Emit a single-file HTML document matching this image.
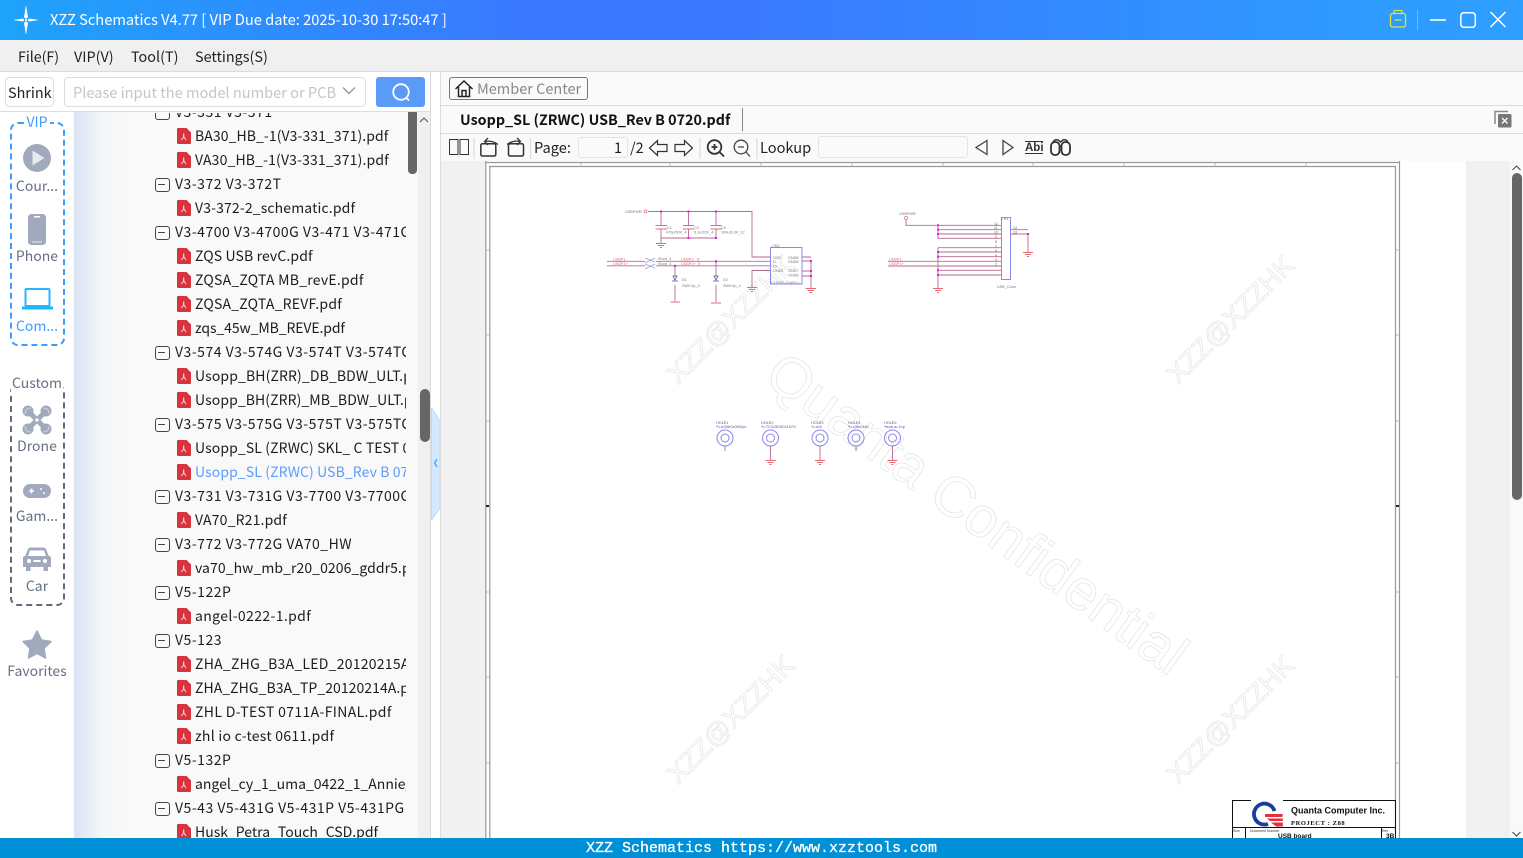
<!DOCTYPE html>
<html><head><meta charset="utf-8"><style>
*{box-sizing:border-box}
html,body{margin:0;padding:0;width:1523px;height:858px;overflow:hidden;background:#fafafa;font-family:"Liberation Sans","Noto Sans CJK SC",sans-serif}
.a{position:absolute}
.t{position:absolute;white-space:nowrap;font-family:"Noto Sans CJK SC","Liberation Sans",sans-serif;font-size:14.400px;line-height:20px;color:#222}
#tree{position:absolute;left:74px;top:113px;width:332px;height:725px;overflow:hidden}
#tree .t{color:#1c1c1c;font-size:14px;letter-spacing:.12px}
#tree .g{left:101px;letter-spacing:.5px}
#tree .f{left:121px}
#tree .g:before{content:"";position:absolute;left:-20px;top:4px;width:13px;height:12px;border:1px solid #444;border-radius:3px}
#tree .g:after{content:"";position:absolute;left:-17px;top:10px;width:7px;height:1px;background:#444}
#tree .f:before{content:"";position:absolute;left:-18px;top:2px;width:14px;height:16px;background:#d7333d;border-radius:1px;clip-path:polygon(0 0,68% 0,100% 28%,100% 100%,0 100%)}
#tree .f:after{content:"⅄";position:absolute;left:-14px;top:2px;width:8px;font:9px/18px "Liberation Sans",sans-serif;letter-spacing:0;color:#fff}
.side{position:absolute;left:0;width:74px;text-align:center;font-family:"Noto Sans CJK SC","Liberation Sans",sans-serif;font-size:14px;line-height:20px;color:#667085}
</style></head><body>

<div class="a" style="left:0;top:0;width:1523px;height:40px;background:linear-gradient(90deg,#1ea3fb 0%,#3a78ff 35%,#3a78ff 48%,#2e9bff 90%,#2e9eff 100%)"></div>
<svg class="a" style="left:10px;top:4px" width="32" height="32" viewBox="0 0 32 32"><path d="M16 1L18 13L16 15L14 13ZM16 31L18 19L16 17L14 19ZM3 16L13 14.500L14.500 16L13 17.500ZM29 16L19 14.500L17.500 16L19 17.500Z" fill="#fff"/><circle cx="16" cy="16" r="1" fill="#fff"/></svg>
<div class="t" style="left:50px;top:10px;color:#fff;font-size:14.670px">XZZ Schematics V4.77 [ VIP Due date: 2025-10-30 17:50:47 ]</div>
<svg class="a" style="left:1385px;top:6px" width="130" height="28" viewBox="0 0 130 28" fill="none"><rect x="5.500" y="7.500" width="15" height="13.500" rx="2" stroke="#dfe23c" stroke-width="1.300"/><path d="M9 7.500V5.500Q9 4.500 10 4.500H16Q17 4.500 17 5.500V7.500M9.500 14H16.500" stroke="#dfe23c" stroke-width="1.300"/><path d="M32.500 4V24" stroke="#6dbbff"/><path d="M45 14H61" stroke="#fff" stroke-width="1.600"/><rect x="75.800" y="6.800" width="14.500" height="14.500" rx="3" stroke="#fff" stroke-width="1.500"/><path d="M105.500 6L120.500 21M120.500 6L105.500 21" stroke="#fff" stroke-width="1.500"/></svg>

<div class="a" style="left:0;top:40px;width:1523px;height:32px;background:#f0f0f0;border-bottom:1px solid #dcdcdc"></div>
<div class="t" style="left:18px;top:47px;font-size:14.200px">File(F)</div>
<div class="t" style="left:74px;top:47px">VIP(V)</div>
<div class="t" style="left:131px;top:47px">Tool(T)</div>
<div class="t" style="left:195px;top:47px">Settings(S)</div>

<div class="a" style="left:0;top:72px;width:431px;height:40px;background:#fff;border-bottom:1px solid #ddd"></div>
<div class="a" style="left:5px;top:77px;width:49px;height:30px;background:#fff;border:1px solid #ddd;border-radius:4px"></div>
<div class="t" style="left:8px;top:83px">Shrink</div>
<div class="a" style="left:64px;top:77px;width:302px;height:30px;background:#fff;border:1px solid #ddd;border-radius:4px"></div>
<div class="t" style="left:73px;top:83px;color:#c3c6cc;font-size:14.600px">Please input the model number or PCB</div>
<svg class="a" style="left:341px;top:85px" width="16" height="12" fill="none"><path d="M2 2.500L8 8.500L14 2.500" stroke="#999" stroke-width="1.400"/></svg>
<div class="a" style="left:376px;top:77px;width:49px;height:30px;background:#5a9bfa;border-radius:3px"></div>
<svg class="a" style="left:390px;top:81px" width="22" height="22" fill="none"><circle cx="11" cy="11" r="7.800" stroke="#fff" stroke-width="1.800"/><path d="M16.500 17L19 19.500" stroke="#fff" stroke-width="1.800"/></svg>

<!-- sidebar -->
<div class="a" style="left:0;top:112px;width:74px;height:726px;background:#fff"></div>
<div class="a" style="left:9.500px;top:122px;width:55px;height:224px;border:2px dashed #3e9bff;border-radius:8px"></div>
<div class="side" style="top:112px;color:#3e9bff"><span style="background:#fff;padding:0 2px">VIP</span></div>
<svg class="a" style="left:22px;top:143px" width="30" height="30"><circle cx="15" cy="15" r="14" fill="#a1a9bd"/><path d="M10.500 7.500L22.500 15L10.500 22.500Z" fill="#e8eaf0"/></svg>
<div class="side" style="top:176px">Cour...</div>
<svg class="a" style="left:28px;top:214px" width="18" height="31"><rect width="18" height="31" rx="3.500" fill="#a1a9bd"/><rect x="6" y="2" width="6" height="1.500" fill="#fff"/><rect x="4" y="27.500" width="10" height="1" fill="#e8eaf0"/></svg>
<div class="side" style="top:246px">Phone</div>
<svg class="a" style="left:22px;top:288px" width="31" height="22" fill="none"><rect x="3.500" y="1" width="24" height="17" rx="1" stroke="#2ab4ff" stroke-width="2"/><path d="M0 20H31" stroke="#17b8ff" stroke-width="3"/></svg>
<div class="side" style="top:316px;color:#3e9bff">Com...</div>

<div class="a" style="left:9.500px;top:384px;width:55px;height:222px;border:2px dashed #606a7d;border-radius:8px"></div>
<div class="side" style="top:373px"><span style="background:#fff;padding:0 1px">Custom</span></div>
<svg class="a" style="left:22px;top:405px" width="30" height="30" fill="none"><g fill="#a1a9bd"><circle cx="6" cy="6" r="5.500"/><circle cx="24" cy="6" r="5.500"/><circle cx="6" cy="24" r="5.500"/><circle cx="24" cy="24" r="5.500"/></g><path d="M6 6L24 24M24 6L6 24" stroke="#a1a9bd" stroke-width="5"/><circle cx="15" cy="15" r="2.500" fill="#fff" stroke="#a1a9bd" stroke-width="1.500"/><path d="M3 9Q3 3 9 3M27 9Q27 3 21 3M3 21Q3 27 9 27M27 21Q27 27 21 27" stroke="#d0d4de"/></svg>
<div class="side" style="top:436px">Drone</div>
<svg class="a" style="left:23px;top:484px" width="28" height="14"><rect width="28" height="14" rx="7" fill="#a1a9bd"/><path d="M6 7H11M8.500 4.500V9.500" stroke="#fff" stroke-width="1.500"/><circle cx="18" cy="5" r="1" fill="#fff"/><circle cx="21" cy="9" r="1" fill="#fff"/></svg>
<div class="side" style="top:506px">Gam...</div>
<svg class="a" style="left:23px;top:547px" width="28" height="25"><path d="M5 2Q6 0.500 8 0.500H20Q22 0.500 23 2L25.500 8.500L28 10V20H25V24H20.500V20H7.500V24H3V20H0V10L2.500 8.500ZM7 3.500L5 9H23L21 3.500Z" fill="#a1a9bd" fill-rule="evenodd"/><circle cx="6" cy="14" r="2" fill="#fff"/><circle cx="22" cy="14" r="2" fill="#fff"/><rect x="10.500" y="13" width="7" height="2" fill="#fff"/></svg>
<div class="side" style="top:576px">Car</div>
<svg class="a" style="left:22px;top:630px" width="30" height="29"><path d="M15 1L19.500 10L29 11.500L22 18.500L23.500 28L15 23.500L6.500 28L8 18.500L1 11.500L10.500 10Z" fill="#a1a9bd" stroke="#a1a9bd" stroke-linejoin="round" stroke-width="1.500"/></svg>
<div class="side" style="top:661px">Favorites</div>

<!-- tree -->
<div class="a" style="left:74px;top:112px;width:344px;height:726px;background:linear-gradient(90deg,#dbe4f3 0,#f3f5f8 26px,#f9f9f9 50px)"></div>
<div id="tree">
<div class="t g" style="top:-11px">V3-331 V3-371</div>
<div class="t f" style="top:13px;letter-spacing:.08px">BA30_HB_-1(V3-331_371).pdf</div>
<div class="t f" style="top:37px;letter-spacing:.15px">VA30_HB_-1(V3-331_371).pdf</div>
<div class="t g" style="top:61px">V3-372 V3-372T</div>
<div class="t f" style="top:85px;letter-spacing:.14px">V3-372-2_schematic.pdf</div>
<div class="t g" style="top:109px">V3-4700 V3-4700G V3-471 V3-471G</div>
<div class="t f" style="top:133px">ZQS USB revC.pdf</div>
<div class="t f" style="top:157px;letter-spacing:.24px">ZQSA_ZQTA MB_revE.pdf</div>
<div class="t f" style="top:181px;letter-spacing:.22px">ZQSA_ZQTA_REVF.pdf</div>
<div class="t f" style="top:205px;letter-spacing:-.1px">zqs_45w_MB_REVE.pdf</div>
<div class="t g" style="top:229px">V3-574 V3-574G V3-574T V3-574TG</div>
<div class="t f" style="top:253px">Usopp_BH(ZRR)_DB_BDW_ULT.pdf</div>
<div class="t f" style="top:277px;letter-spacing:.08px">Usopp_BH(ZRR)_MB_BDW_ULT.pdf</div>
<div class="t g" style="top:301px">V3-575 V3-575G V3-575T V3-575TG</div>
<div class="t f" style="top:325px;letter-spacing:.1px">Usopp_SL (ZRWC) SKL_ C TEST 0720.pdf</div>
<div class="t f" style="top:349px;color:#5b9cff;letter-spacing:.1px">Usopp_SL (ZRWC) USB_Rev B 0720.pdf</div>
<div class="t g" style="top:373px">V3-731 V3-731G V3-7700 V3-7700G</div>
<div class="t f" style="top:397px;letter-spacing:.17px">VA70_R21.pdf</div>
<div class="t g" style="top:421px">V3-772 V3-772G VA70_HW</div>
<div class="t f" style="top:445px;letter-spacing:.07px">va70_hw_mb_r20_0206_gddr5.pdf</div>
<div class="t g" style="top:469px">V5-122P</div>
<div class="t f" style="top:493px;letter-spacing:.37px">angel-0222-1.pdf</div>
<div class="t g" style="top:517px">V5-123</div>
<div class="t f" style="top:541px;letter-spacing:.25px">ZHA_ZHG_B3A_LED_20120215A.pdf</div>
<div class="t f" style="top:565px;letter-spacing:.05px">ZHA_ZHG_B3A_TP_20120214A.pdf</div>
<div class="t f" style="top:589px;letter-spacing:.35px">ZHL D-TEST 0711A-FINAL.pdf</div>
<div class="t f" style="top:613px;letter-spacing:.27px">zhl io c-test 0611.pdf</div>
<div class="t g" style="top:637px">V5-132P</div>
<div class="t f" style="top:661px;letter-spacing:0">angel_cy_1_uma_0422_1_Annie_0422.pdf</div>
<div class="t g" style="top:685px">V5-43 V5-431G V5-431P V5-431PG</div>
<div class="t f" style="top:709px;letter-spacing:0">Husk_Petra_Touch_CSD.pdf</div>
</div>
<div class="a" style="left:408px;top:112px;width:9px;height:62px;background:#666;border-radius:0 0 4px 4px"></div>
<div class="a" style="left:418px;top:112px;width:12px;height:726px;background:#f0f0f0"></div>
<svg class="a" style="left:418px;top:115px" width="12" height="10" fill="none"><path d="M2 7L6 3L10 7" stroke="#555"/></svg>
<div class="a" style="left:420px;top:389px;width:9.500px;height:53px;background:#666;border-radius:5px"></div>
<div class="a" style="left:430px;top:72px;width:1px;height:766px;background:#dcdcdc"></div>
<div class="a" style="left:431px;top:72px;width:9px;height:766px;background:#fff"></div>
<svg class="a" style="left:431px;top:408px" width="10" height="112"><path d="M0.500 0L9 13V100L0.500 112Z" fill="#d4e9ff" stroke="#b6dbff"/><path d="M6 51L3.500 55L6 59" fill="none" stroke="#4da3f5" stroke-width="1.300"/></svg>
<div class="a" style="left:440px;top:72px;width:1px;height:766px;background:#dcdcdc"></div>

<!-- right header -->
<div class="a" style="left:441px;top:72px;width:1082px;height:89px;background:#fafafa"></div>
<div class="a" style="left:441px;top:105px;width:1082px;height:1px;background:#dcdcdc"></div>
<div class="a" style="left:441px;top:133px;width:1082px;height:1px;background:#dcdcdc"></div>
<div class="a" style="left:449px;top:77px;width:139px;height:23px;border:1px solid #777;border-radius:3px;background:#fafafa"></div>
<svg class="a" style="left:454px;top:79px" width="20" height="19" fill="none"><path d="M1.500 10L10 2L18.500 10M4.500 8V17.500H15.500V8M8 17.500V11.500H12V17.500" stroke="#222" stroke-width="1.500"/></svg>
<div class="t" style="left:477px;top:79px;color:#888;font-size:14.500px">Member Center</div>
<div class="t" style="left:460px;top:110px;font-weight:700;color:#111;font-size:14.300px">Usopp_SL (ZRWC) USB_Rev B 0720.pdf</div>
<div class="a" style="left:742px;top:108px;width:1px;height:23px;background:#888"></div>
<svg class="a" style="left:1494px;top:110px" width="18" height="18" fill="none"><path d="M1 14V1.500H14" stroke="#888" stroke-width="1.500"/><rect x="4" y="4" width="13.500" height="13.500" rx="1" fill="#777"/><path d="M8 8L13.500 13.500M13.500 8L8 13.500" stroke="#fff" stroke-width="1.300"/></svg>

<!-- toolbar -->
<svg class="a" style="left:441px;top:134px" width="640" height="27" fill="none" stroke="#333" stroke-width="1.200">
<rect x="8.500" y="5.500" width="8.500" height="15" stroke-width="1"/><rect x="19" y="5.500" width="8.500" height="15" stroke-width="1"/>
<path d="M33 4V25M89.500 4V25M259 4V25M316 4V25" stroke="#ddd"/>
<rect x="39.800" y="9.800" width="15" height="12.200" rx="1.500" stroke-width="1.500"/><path d="M44 7.500Q51 6 57 10.500M47 4L43.500 7.500L47 11" stroke-width="1.300"/>
<rect x="67.500" y="9.800" width="15" height="12.200" rx="1.500" stroke-width="1.500"/><path d="M79 7.500Q72 6 66 10.500M76 4L79.500 7.500L76 11" stroke-width="1.300"/>
<path d="M208.500 14L216.500 6.500V10.500H226V17.500H216.500V21.500Z"/>
<path d="M251.500 14L243.500 6.500V10.500H234V17.500H243.500V21.500Z"/>
<circle cx="273.500" cy="13" r="6.800" stroke-width="1.800"/><path d="M278.500 18L283 22.500M270.500 13H276.500M273.500 10V16" stroke-width="1.800"/>
<circle cx="300" cy="13" r="6.800" stroke="#444" stroke-width="1.300"/><path d="M305 18L309 22.500M297 13H303" stroke="#444" stroke-width="1.300"/>
<path d="M546 6.500L535 13.500L546 20.500Z" stroke="#444" stroke-width="1.300"/>
<path d="M562 6.500L572 13.500L562 20.500Z" stroke="#444" stroke-width="1.300"/>
<path d="M584 7.500H602M584 19.500H602" stroke-width="1"/>
<rect x="610" y="8" width="8.500" height="13" rx="4" stroke-width="1.800"/><rect x="620.500" y="8" width="8.500" height="13" rx="4" stroke-width="1.800"/><path d="M618.500 12H620.500" stroke-width="1.800"/><path d="M612 8Q614 5 617 6L619.500 8L622 6Q625 5 627 8" stroke-width="1.500"/>
</svg>
<div class="t" style="left:534px;top:138px;font-size:14.600px">Page:</div>
<div class="a" style="left:578px;top:137px;width:50px;height:21px;border:1px solid #e3e3e3;border-radius:3px;background:#fafafa"></div>
<div class="t" style="left:614px;top:138px">1</div>
<div class="t" style="left:630px;top:138px">/2</div>
<div class="t" style="left:760px;top:138px;font-size:14.600px">Lookup</div>
<div class="a" style="left:818px;top:136px;width:150px;height:22px;border:1px solid #e3e3e3;border-radius:3px;background:#fafafa"></div>
<div class="a" style="left:1025px;top:141.500px;font:bold 11.500px/13px 'Liberation Sans',sans-serif;color:#333;white-space:nowrap">Abi</div>

<!-- viewer -->
<div class="a" style="left:441px;top:161px;width:1069px;height:677px;background:#f1f1f1"></div>
<div class="a" style="left:485px;top:161px;width:981px;height:677px;background:#fff"></div>
<div class="a" style="left:1510px;top:161px;width:13px;height:677px;background:#f9f9f9"></div>
<svg class="a" style="left:1510px;top:163px" width="13" height="10" fill="none"><path d="M2.500 7L6.500 3L10.500 7" stroke="#444"/></svg>
<svg class="a" style="left:1510px;top:830px" width="13" height="8" fill="none"><path d="M2.500 2L6.500 6L10.500 2" stroke="#444"/></svg>
<div class="a" style="left:1512px;top:173px;width:10px;height:327px;background:#666;border-radius:5px"></div>

<svg class="a" style="left:485px;top:161px" width="981" height="677" viewBox="485 161 981 677" fill="none" font-family="Liberation Sans,sans-serif">
<!-- frame -->
<path d="M485.800 161V838M1399.500 161V838M485 162.500H1400" stroke="#999" stroke-width="1.200"/>
<path d="M489.800 167V838M1395.500 167V838M489 166.500H1396" stroke="#999" stroke-width="1.200"/>
<path d="M581 163V166M670 163V166M761 163V166M852 163V166M943 163V166M1033 163V166M1124 163V166M1215 163V166M1306 163V166M486 250H489M486 335H489M486 421H489M486 592H489M486 677H489M486 763H489M1396 250H1399M1396 335H1399M1396 421H1399M1396 592H1399M1396 677H1399M1396 763H1399" stroke="#aaa" stroke-width=".8"/>
<path d="M486 506H489M1396 506H1399" stroke="#222" stroke-width="2"/>

<!-- watermarks -->
<g font-size="27" stroke="#e6e6e6" stroke-width=".8" fill="#fff" font-family="Liberation Sans,sans-serif">
<text transform="translate(678,385) rotate(-45)">XZZ@XZZHK</text>
<text transform="translate(1178,385) rotate(-45)">XZZ@XZZHK</text>
<text transform="translate(678,785) rotate(-45)">XZZ@XZZHK</text>
<text transform="translate(1178,785) rotate(-45)">XZZ@XZZHK</text>
<text transform="translate(762,381) rotate(36)" font-size="57">Quanta Confidential</text>
</g>

<!-- schematic 1 -->
<g stroke="#b56a8e" stroke-width=".9">
<path d="M648 211.500H752V257H770"/>
<path d="M661 211.500V226M661 229V238M688.500 211.500V226M688.500 229V238M716 211.500V226M716 229V238M661 238H716M661 238V243"/>
<path d="M607 261.300H645M607 265.800H645M656 261.300H770M656 265.800H770" />
<path d="M675 265.800V276M675 285V301M716 261.300V276M716 285V302"/>
<path d="M752 287V270.500H770M802 257H811M802 261H811M802 271H811M802 276H811M811 261V288"/>
</g>
<g stroke="#e46a78" stroke-width=".9">
<path d="M655.500 225.500H667M655.500 229H667M683 225.500H694M683 229H694M710.500 225.500H721.500M710.500 229H721.500"/>
<path d="M656 243.500H666M658 245.500H664M660 247.500H662M747 287.500H757M749 289.500H755M751 291.500H753M805.500 288.500H816M807.500 290.500H814M809.500 292.500H812M670.500 302H680M711 303H721"/>
<path d="M645 258L655 262M645 264L655 268M645 263L655 258M645 269L655 264" stroke-width=".6" stroke="#7777cc"/>
</g>
<circle cx="645.500" cy="211.500" r="1.500" stroke="#e46a78" stroke-width=".7"/>
<g fill="#e818e0"><rect x="660" y="210.500" width="2" height="2"/><rect x="687.500" y="210.500" width="2" height="2"/><rect x="715" y="210.500" width="2" height="2"/><rect x="687.500" y="237" width="2" height="2"/><rect x="715" y="237" width="2" height="2"/><rect x="674" y="264.800" width="2" height="2"/><rect x="715" y="260.300" width="2" height="2"/><rect x="810" y="260" width="2" height="2"/><rect x="810" y="270" width="2" height="2"/><rect x="810" y="275" width="2" height="2"/></g>
<rect x="770.500" y="247.500" width="31.500" height="36.500" stroke="#8888ee" stroke-width="1"/>
<path d="M673 276H677L675 280ZM714 276H718L716 280ZM672 281H678M713 281H719" stroke="#4a4ab0" stroke-width=".8"/>
<g fill="#777" font-size="3.800">
<text x="625" y="213">USBPWR</text><text x="667" y="229">C1</text><text x="694" y="229">C2</text><text x="721" y="229">C3</text>
<text x="666" y="233.500">470p/50V_4</text><text x="694" y="233.500">0.1u/16V_4</text><text x="721" y="233.500">100u/6.3V_12</text>
<text x="658" y="260">Short_4</text><text x="658" y="265">Short_4</text>
<text x="772" y="247">CN2</text><text x="773" y="259">VDD</text><text x="773" y="263">D-</text><text x="773" y="267.500">D+</text><text x="773" y="272">GND1</text>
<text x="788" y="259">GND8</text><text x="788" y="263">GND5</text><text x="788" y="272">GND7</text><text x="788" y="276.500">GND6</text>
<text x="771" y="284">C10793-1040S-L</text>
<text x="682" y="281">D1</text><text x="682" y="287">SW0.0p_4</text><text x="723" y="281">D2</text><text x="723" y="287">SW0.0p_4</text>
</g>
<g fill="#e46a78" font-size="3.800"><text x="613" y="260.500">USBP1-</text><text x="613" y="265">USBP1+</text><text x="681" y="260.500">USBP2-_R</text><text x="681" y="265">USBP2+_R</text></g>

<!-- schematic 2 -->
<g stroke="#b56a8e" stroke-width=".9">
<path d="M906 220V225.300H1001M938 225.300V238.300H1001M938 229.700H1001M938 234H1001M938 247.700H1001M938 252H1001M938 256.700H1001M888 261.300H1001M888 266H1001M938 270.300H1001M938 275H1001M938 247.700V288"/>
<path d="M1010 229.700H1028M1010 234H1028M1028 234V252"/>
</g>
<g stroke="#e46a78" stroke-width=".9"><path d="M933 288.500H943M935 290.500H941M937 292.500H939M1023 252.500H1033M1025 254.500H1031M1027 256.500H1029"/></g>
<circle cx="906" cy="218" r="1.500" stroke="#e46a78" stroke-width=".7"/>
<g fill="#e818e0"><rect x="937" y="224.300" width="2" height="2"/><rect x="937" y="228.700" width="2" height="2"/><rect x="937" y="233" width="2" height="2"/><rect x="937" y="251" width="2" height="2"/><rect x="937" y="255.700" width="2" height="2"/><rect x="937" y="269.300" width="2" height="2"/><rect x="937" y="274" width="2" height="2"/><rect x="1027" y="233" width="2" height="2"/></g>
<rect x="1001.500" y="217.500" width="9" height="62" stroke="#8888ee" stroke-width="1"/>
<g fill="#777" font-size="3.800"><text x="899" y="215">USBPWR</text><text x="1001" y="220">CN1</text><text x="997" y="288">USB_Conn</text></g>
<g fill="#666" font-size="3.500"><text x="994" y="224.800">12</text><text x="994" y="229.200">11</text><text x="994" y="233.600">10</text><text x="995" y="238">9</text><text x="995" y="243">8</text><text x="995" y="247.400">7</text><text x="995" y="252">6</text><text x="995" y="256.500">4</text><text x="995" y="261">3</text><text x="995" y="265.700">2</text><text x="1013" y="229">14</text><text x="1013" y="233.500">13</text></g>
<g fill="#e46a78" font-size="3.800"><text x="889" y="260.500">USBP1-</text><text x="889" y="265">USBP1+</text></g>

<!-- holes -->
<g stroke="#8888ee" stroke-width="1"><circle cx="725" cy="438" r="8"/><circle cx="725" cy="438" r="4"/><circle cx="770.500" cy="438" r="8"/><circle cx="770.500" cy="438" r="4"/><circle cx="820" cy="438" r="8"/><circle cx="820" cy="438" r="4"/><circle cx="856" cy="438" r="8"/><circle cx="856" cy="438" r="4"/><circle cx="892.500" cy="438" r="8"/><circle cx="892.500" cy="438" r="4"/></g>
<path d="M725 446V451M770.500 446V460M820 446V460M856 446V451M892.500 446V460" stroke="#b56a8e" stroke-width=".9"/>
<path d="M765.500 460.500H775.500M767.500 462.500H773.500M769.500 464.500H771.500M815 460.500H825M817 462.500H823M819 464.500H821M887.500 460.500H897.500M889.500 462.500H895.500M891.500 464.500H893.500" stroke="#e46a78" stroke-width=".9"/>
<g fill="#5555aa" font-size="3.800"><text x="716" y="424">HOLE1</text><text x="716" y="428">*h-tc33bi1r0t3i2pt</text><text x="761" y="424">HOLE2</text><text x="761" y="428">*h-TC315D5D1157U</text><text x="811" y="424">HOLE3</text><text x="811" y="428">*c-cb3</text><text x="848" y="424">HOLE4</text><text x="848" y="428">*h-c38r248n</text><text x="884" y="424">HOLE5</text><text x="884" y="428">*tepb-m-1np</text></g>

<!-- title block -->
<g stroke="#111" stroke-width="1"><path d="M1251 800.500H1232.500V838M1283 800.500H1395.500V838M1232 827.500H1395.500M1245.500 827.500V838M1381.500 827.500V838"/></g>
<path d="M1274.500 811A10.500 10.500 0 1 0 1268 824" stroke="#143f9c" stroke-width="3.800"/>
<path d="M1265 814H1282.800L1282.300 817H1265ZM1267 818.500H1282.800V821H1270ZM1271 822.500H1282.800V826.500H1276Z" fill="#e2303c"/>
<text x="1291" y="813.500" fill="#111" font-size="9" font-weight="700">Quanta Computer Inc.</text>
<text x="1291" y="825" fill="#111" font-size="6.500" font-weight="700" font-family="Liberation Serif,serif" letter-spacing=".6">PROJECT  : Z88</text>
<text x="1233" y="832" fill="#333" font-size="3.500">Size</text>
<text x="1250" y="832" fill="#333" font-size="3.500">Document Number</text>
<text x="1382" y="832" fill="#333" font-size="3.500">Rev</text>
<text x="1278" y="838" fill="#111" font-size="6.500" font-weight="700">USB board</text>
<text x="1386" y="838" fill="#111" font-size="6.500" font-weight="700">3B</text>
</svg>

<div class="a" style="left:0;top:838px;width:1523px;height:20px;background:#0090d8"></div>
<div class="a" style="left:0;top:840px;width:1523px;text-align:center;color:#fff;font:15px/18px 'Liberation Mono',monospace;white-space:nowrap;-webkit-text-stroke:.3px #fff">XZZ Schematics https://www.xzztools.com</div>
</body></html>
